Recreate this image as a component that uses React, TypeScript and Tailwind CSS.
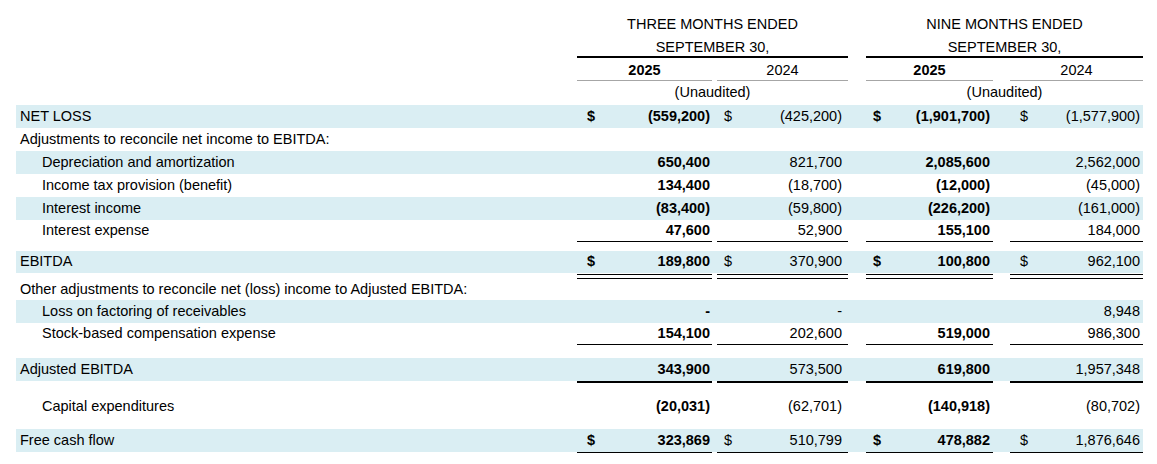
import React from 'react';

type Line = 'single' | 'double' | 'thick' | 'none';

interface Row {
  label: string;
  indent?: boolean;
  shaded?: boolean;
  dollar?: boolean;
  values?: [string, string, string, string];
  height: string;
  line?: Line;
  gapAfter?: string;
}

const rows: Row[] = [
  { label: 'NET LOSS', shaded: true, dollar: true, values: ['(559,200)', '(425,200)', '(1,901,700)', '(1,577,900)'], height: 'h-[23px]' },
  { label: 'Adjustments to reconcile net income to EBITDA:', height: 'h-[23px]' },
  { label: 'Depreciation and amortization', indent: true, shaded: true, values: ['650,400', '821,700', '2,085,600', '2,562,000'], height: 'h-[23px]' },
  { label: 'Income tax provision (benefit)', indent: true, values: ['134,400', '(18,700)', '(12,000)', '(45,000)'], height: 'h-[23px]' },
  { label: 'Interest income', indent: true, shaded: true, values: ['(83,400)', '(59,800)', '(226,200)', '(161,000)'], height: 'h-[23px]' },
  { label: 'Interest expense', indent: true, values: ['47,600', '52,900', '155,100', '184,000'], height: 'h-[21px]', line: 'single', gapAfter: 'h-[9px]' },
  { label: 'EBITDA', shaded: true, dollar: true, values: ['189,800', '370,900', '100,800', '962,100'], height: 'h-[22px]', line: 'double' },
  { label: 'Other adjustments to reconcile net (loss) income to Adjusted EBITDA:', height: 'h-[21px]' },
  { label: 'Loss on factoring of receivables', indent: true, shaded: true, values: ['-', '-', '', '8,948'], height: 'h-[23px]' },
  { label: 'Stock-based compensation expense', indent: true, values: ['154,100', '202,600', '519,000', '986,300'], height: 'h-[21px]', line: 'single', gapAfter: 'h-[13px]' },
  { label: 'Adjusted EBITDA', shaded: true, values: ['343,900', '573,500', '619,800', '1,957,348'], height: 'h-[23px]', line: 'thick', gapAfter: 'h-[12px]' },
  { label: 'Capital expenditures', indent: true, values: ['(20,031)', '(62,701)', '(140,918)', '(80,702)'], height: 'h-[24px]', gapAfter: 'h-[10px]' },
  { label: 'Free cash flow', shaded: true, dollar: true, values: ['323,869', '510,799', '478,882', '1,876,646'], height: 'h-[23px]', line: 'single' },
];

// widths: label | c1 | gap | c2 | gap | c3 | gap | c4
const cols = [
  { w: 'w-[135px]', pad: 'pl-[10px] pr-[2px]', bold: true },
  { w: 'w-[131px]', pad: 'pl-[7px] pr-[6px]', bold: false },
  { w: 'w-[127px]', pad: 'pl-[7px] pr-[3px]', bold: true },
  { w: 'w-[133px]', pad: 'pl-[10px] pr-[3px]', bold: false },
];
const gaps = ['w-[5px]', 'w-[18px]', 'w-[17px]'];

const lineClass: Record<Line, string> = {
  single: 'h-[1px] bg-black',
  double: 'mt-[1px] h-[5px] border-y border-black',
  thick: 'h-[2px] bg-black',
  none: '',
};

function Columns({ render }: { render: (i: number) => React.ReactNode }) {
  return (
    <>
      {cols.map((c, i) => (
        <React.Fragment key={i}>
          <div className={`${c.w} shrink-0`}>{render(i)}</div>
          {i < 3 && <div className={`${gaps[i]} shrink-0`} />}
        </React.Fragment>
      ))}
    </>
  );
}

function PeriodHeader({ title, width }: { title: string; width: string }) {
  return (
    <div className={`${width} shrink-0 border-b-2 border-black text-center leading-[23px]`}>
      <div className="h-[23px]">{title}</div>
      <div className="h-[20px]">SEPTEMBER 30,</div>
    </div>
  );
}

const App: React.FC = () => {
  return (
    <div
      className="w-[1157px] h-[464px] bg-white pl-[16px] pt-[13px] text-[14.5px] text-black"
      style={{ fontFamily: '"Liberation Sans", Arial, sans-serif' }}
    >
      <div className="w-[1127px]">
        {/* Column headers */}
        <div className="flex">
          <div className="w-[561px] shrink-0" />
          <PeriodHeader title="THREE MONTHS ENDED" width="w-[271px]" />
          <div className="w-[18px] shrink-0" />
          <PeriodHeader title="NINE MONTHS ENDED" width="w-[277px]" />
        </div>
        <div className="flex h-[23px] leading-[24px]">
          <div className="w-[561px] shrink-0" />
          <Columns
            render={(i) => (
              <div className={`h-[23px] border-b border-[#a6a6a6] text-center ${cols[i].bold ? 'font-bold' : ''}`}>
                {i % 2 === 0 ? '2025' : '2024'}
              </div>
            )}
          />
        </div>
        <div className="flex h-[24px] items-center">
          <div className="w-[561px] shrink-0" />
          <div className="w-[271px] shrink-0 text-center">(Unaudited)</div>
          <div className="w-[18px] shrink-0" />
          <div className="w-[277px] shrink-0 text-center">(Unaudited)</div>
        </div>

        {/* Body rows */}
        {rows.map((r) => (
          <div key={r.label}>
            <div className={`flex items-center ${r.height} ${r.shaded ? 'bg-[#daeef3]' : ''}`}>
              <div className={`w-[561px] shrink-0 whitespace-nowrap ${r.indent ? 'pl-[26px]' : 'pl-[4px]'}`}>
                {r.label}
              </div>
              {r.values && (
                <Columns
                  render={(i) => (
                    <div className={`flex justify-between whitespace-nowrap ${cols[i].pad} ${cols[i].bold ? 'font-bold' : ''}`}>
                      <span>{r.dollar ? '$' : ''}</span>
                      <span>{r.values![i]}</span>
                    </div>
                  )}
                />
              )}
            </div>
            {r.line && r.line !== 'none' && (
              <div className="flex">
                <div className="w-[561px] shrink-0" />
                <Columns render={() => <div className={lineClass[r.line!]} />} />
              </div>
            )}
            {r.gapAfter && <div className={r.gapAfter} />}
          </div>
        ))}
      </div>
    </div>
  );
};

export default App;
